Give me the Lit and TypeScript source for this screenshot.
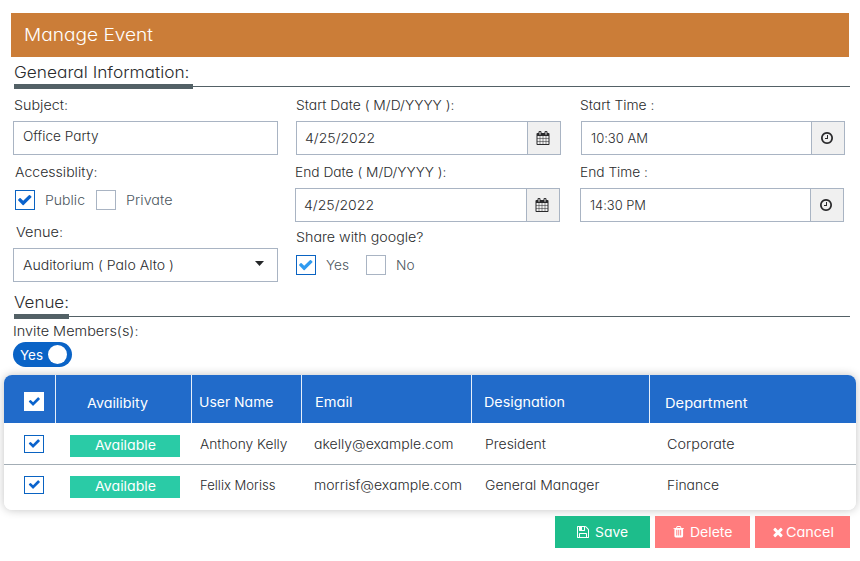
import { LitElement, html, css, svg, nothing } from "lit";
import { customElement, property } from "lit/decorators.js";

const icons: Record<string, string> = {
  check:
    "M1671 566q0 40-28 68l-724 724-136 136q-28 28-68 28t-68-28l-136-136-362-362q-28-28-28-68t28-68l136-136q28-28 68-28t68 28l294 295 656-657q28-28 68-28t68 28l136 136q28 28 28 68z",
  calendar:
    "M192 1664h288v-288h-288v288zm352 0h320v-288h-320v288zm-352-352h288v-320h-288v320zm352 0h320v-320h-320v320zm-352-384h288v-288h-288v288zm736 736h320v-288h-320v288zm-384-736h320v-288h-320v288zm768 736h288v-288h-288v288zm-384-352h320v-320h-320v320zm-352-864v-288q0-13-9.5-22.5t-22.5-9.5h-64q-13 0-22.5 9.5t-9.5 22.5v288q0 13 9.5 22.5t22.5 9.5h64q13 0 22.5-9.5t9.5-22.5zm736 864h288v-320h-288v320zm-384-384h320v-288h-320v288zm384 0h288v-288h-288v288zm32-480v-288q0-13-9.5-22.5t-22.5-9.5h-64q-13 0-22.5 9.5t-9.5 22.5v288q0 13 9.5 22.5t22.5 9.5h64q13 0 22.5-9.5t9.5-22.5zm384-64v1280q0 52-38 90t-90 38h-1408q-52 0-90-38t-38-90v-1280q0-52 38-90t90-38h128v-96q0-66 47-113t113-47h64q66 0 113 47t47 113v96h384v-96q0-66 47-113t113-47h64q66 0 113 47t47 113v96h128q52 0 90 38t38 90z",
  clock:
    "M1024 544v448q0 14-9 23t-23 9h-320q-14 0-23-9t-9-23v-64q0-14 9-23t23-9h224v-352q0-14 9-23t23-9h64q14 0 23 9t9 23zm416 352q0-148-73-273t-198-198-273-73-273 73-198 198-73 273 73 273 198 198 273 73 273-73 198-198 73-273zm224 0q0 209-103 385.5t-279.5 279.5-385.5 103-385.5-103-279.5-279.5-103-385.5 103-385.5 279.5-279.5 385.5-103 385.5 103 279.5 279.5 103 385.5z",
  save:
    "M512 1536h768v-384h-768v384zm896 0h128v-896q0-14-10-38.5t-20-34.5l-281-281q-10-10-34-20t-39-10v416q0 40-28 68t-68 28h-576q-40 0-68-28t-28-68v-416h-128v1280h128v-416q0-40 28-68t68-28h832q40 0 68 28t28 68v416zm-384-928v-320q0-13-9.5-22.5t-22.5-9.5h-192q-13 0-22.5 9.5t-9.5 22.5v320q0 13 9.5 22.5t22.5 9.5h192q13 0 22.5-9.5t9.5-22.5zm640 32v928q0 40-28 68t-68 28h-1344q-40 0-68-28t-28-68v-1344q0-40 28-68t68-28h928q40 0 88 20t76 48l280 280q28 28 48 76t20 88z",
  trash:
    "M704 1376v-704q0-14-9-23t-23-9h-64q-14 0-23 9t-9 23v704q0 14 9 23t23 9h64q14 0 23-9t9-23zm256 0v-704q0-14-9-23t-23-9h-64q-14 0-23 9t-9 23v704q0 14 9 23t23 9h64q14 0 23-9t9-23zm256 0v-704q0-14-9-23t-23-9h-64q-14 0-23 9t-9 23v704q0 14 9 23t23 9h64q14 0 23-9t9-23zm-544-992h448l-48-117q-7-9-17-11h-317q-10 2-17 11zm928 32v64q0 14-9 23t-23 9h-96v948q0 83-47 143.5t-113 60.5h-832q-66 0-113-58.5t-47-141.5v-952h-96q-14 0-23-9t-9-23v-64q0-14 9-23t23-9h309l70-167q15-37 54-63t79-26h320q40 0 79 26t54 63l70 167h309q14 0 23 9t9 23z",
  times:
    "M1490 1322q0 40-28 68l-136 136q-28 28-68 28t-68-28l-294-294-294 294q-28 28-68 28t-68-28l-136-136q-28-28-28-68t28-68l294-294-294-294q-28-28-28-68t28-68l136-136q28-28 68-28t68 28l294 294 294-294q28-28 68-28t68 28l136 136q28 28 28 68t-28 68l-294 294 294 294q28 28 28 68z",
};

const icon = (name: string, size = 14) => svg`
  <svg width=${size} height=${size} viewBox="0 0 1792 1792" overflow="visible" fill="currentColor">
    <path d=${icons[name]} />
  </svg>`;

/** One line of text, widened or narrowed so that it spans a set width. */
@customElement("fitted-text")
export class FittedText extends LitElement {
  @property({ type: Number }) span = 0;
  @property() text = "";

  static styles = css`
    :host {
      display: inline-block;
      white-space: pre;
      line-height: 20px;
      flex: none;
    }
    span { display: inline-block; transform-origin: 0 50%; }
  `;

  firstUpdated() {
    const line = this.renderRoot.querySelector("span")!;
    const natural = line.getBoundingClientRect().width;
    line.style.transform = `scaleX(${this.span / natural})`;
    this.style.width = `${this.span}px`;
  }

  render() {
    return html`<span>${this.text}</span>`;
  }
}

const t = (text: string, span: number) =>
  html`<fitted-text .text=${text} .span=${span}></fitted-text>`;

interface Member {
  name: [string, number];
  email: [string, number];
  title: [string, number];
  dept: [string, number];
}

const members: Member[] = [
  {
    name: ["Anthony Kelly", 87.5],
    email: ["akelly@example.com", 139.5],
    title: ["President", 61],
    dept: ["Corporate", 67.5],
  },
  {
    name: ["Fellix Moriss", 75.5],
    email: ["morrisf@example.com", 148],
    title: ["General Manager", 114.5],
    dept: ["Finance", 52],
  },
];

@customElement("app-root")
export class AppRoot extends LitElement {
  static styles = css`
    :host {
      display: block;
      box-sizing: border-box;
      width: 860px;
      height: 561px;
      overflow: hidden;
      padding: 13px 10px 0 11px;
      background: #fff;
      color: #2a2b2d;
      font: 400 13px/20px Inter, "Open Sans", sans-serif;
      font-weight: 350;
      font-feature-settings: "cv11", "calt" 0;
    }
    * { box-sizing: border-box; }
    svg { display: block; flex: none; }
    .banner {
      width: 838px;
      height: 44px;
      padding: 12px 0 0 12.8px;
      background: #cb7d38;
      color: #fff;
      font-size: 17.5px;
    }
    .section { display: flex; align-items: flex-end; margin-left: 3px; }
    .section.first { height: 32px; }
    .section.second { height: 37px; }
    .section h2 {
      margin: 0;
      height: 26px;
      border-bottom: 5px solid #536166;
      font-size: 15.8px;
      font-weight: 350;
      line-height: 20px;
    }
    .section h2.general { width: 179px; }
    .section h2.venue { width: 55px; }
    .rule { flex: 1; height: 1px; margin-bottom: 2px; background: #536166; }
    .columns { display: flex; height: 193px; padding: 6px 0 0 2px; }
    .col { display: flex; flex-direction: column; width: 265px; }
    .col.dates { margin-left: 17px; width: 266px; }
    .col.times { margin-left: 19px; width: 265px; }
    .label { height: 26px; }
    .label.first { padding-left: 0.8px; }
    .label.gap { height: 33px; padding-top: 7px; }
    .label.access { padding-left: 0.8px; }
    .label.venue { height: 38px; padding: 12px 0 0 1.5px; }
    .label.share { height: 32px; padding-top: 5px; }
    .box {
      display: flex;
      width: 265px;
      height: 34px;
      border: 1px solid #a9b4c3;
      padding: 6px 0 0 9px;
    }
    .box.subject { padding-top: 4px; }
    .box.select { justify-content: space-between; padding-right: 13px; }
    .box .value { flex: 1; }
    .dates .box { padding-left: 7.6px; }
    .times .box { width: 264px; padding-left: 8.8px; }
    .addon {
      display: flex;
      align-items: center;
      justify-content: center;
      width: 33px;
      height: 32px;
      padding-right: 2px;
      margin-top: -6px;
      border-left: 1px solid #a9b4c3;
      background: #f0f0f0;
      color: #29292b;
    }
    .inset { margin-left: 1px; }
    .caret {
      margin-top: 6px;
      width: 9px;
      height: 5px;
      background: #252729;
      clip-path: polygon(0 0, 100% 0, 50% 100%);
    }
    .choices { display: flex; align-items: center; height: 20px; color: #4c565e; }
    .choices.access { margin: 2px 0 0 2px; }
    .choices.share { margin: 1px 0 0 1px; }
    .check {
      display: flex;
      align-items: center;
      justify-content: center;
      width: 20px;
      height: 20px;
      border: 1px solid #a9b4c3;
      flex: none;
      margin-right: 10px;
    }
    .check.on { border-color: #0a63c2; color: #0a63cd; padding-bottom: 1px; }
    .check.light { color: #2f9bf0; }
    .next { margin-left: 11px; }
    .share .next { margin-left: 17px; }
    .invite { padding: 2px 0 0 2px; height: 56px; }
    .toggle {
      display: flex;
      align-items: center;
      justify-content: space-between;
      width: 59px;
      height: 25px;
      margin-top: 1px;
      padding: 0 5px 0 7px;
      border-radius: 13px;
      background: #0a63c6;
      color: #fff;
      font-weight: 400;
    }
    .knob { width: 19px; height: 19px; border-radius: 50%; background: #fff; }
    .shadow {
      width: 852px;
      margin-left: -7px;
      border-radius: 8px;
      box-shadow: 0 0 10px rgba(0, 0, 0, 0.24);
    }
    .table {
      height: 135px;
      border-radius: 8px;
      overflow: hidden;
      background: #fff;
    }
    .row {
      display: grid;
      grid-template-columns: 52px 136px 110px 170px 178px 206px;
      height: 41px;
    }
    .row.head { height: 48px; background: #216bca; color: #fff; font-weight: 400; }
    .row.ruled { height: 42px; border-bottom: 1px solid #a3adb5; }
    .cell { padding-top: 10px; }
    .ruled .cell { padding-top: 11px; }
    .head .cell { padding-top: 17px; border-right: 1px solid #e6effa; }
    .head .cell:last-child { border-right: 0; }
    .head .cell.low { padding-top: 18px; }
    .cell .check { height: 18px; margin-left: 20px; margin-top: 1px; }
    .head .check.on { height: 19px; margin-top: 0; border: 0; background: #fff; }
    .c2 { padding-left: 8.4px; }
    .c3 { padding-left: 12.4px; }
    .c4 { padding-left: 13px; }
    .c5 { padding-left: 17.3px; }
    .head .c1 { padding-left: 31px; }
    .head .c2 { padding-left: 7.2px; }
    .head .c3 { padding-left: 13px; }
    .head .c4 { padding-left: 12.2px; }
    .head .c5 { padding-left: 15.3px; }
    .badge {
      display: flex;
      justify-content: center;
      width: 110px;
      height: 22px;
      margin: 1px 0 0 14px;
      background: #2acba6;
      color: #fff;
      font-weight: 400;
    }
    .actions { display: flex; justify-content: flex-end; gap: 5px; margin-top: 6px; width: 839px; }
    .btn {
      display: flex;
      align-items: center;
      width: 95px;
      height: 32px;
      background: #ff7c7d;
      color: #fff;
      font-weight: 400;
    }
    .btn.save { background: #1dbd8b; padding-left: 21px; gap: 5px; }
    .btn.delete { padding-left: 17px; gap: 4.5px; }
    .btn.cancel { padding-left: 16px; gap: 0.5px; }
  `;

  private check(on: boolean, size = 15.5, light = false) {
    return html`<span class="check ${on ? "on" : ""} ${light ? "light" : ""}"
      >${on ? icon("check", size) : nothing}</span
    >`;
  }

  private field(value: string, span: number, glyph: string, cls = "") {
    return html`<div class="box ${cls}">
      <div class="value">${t(value, span)}</div>
      <div class="addon">${icon(glyph, 14)}</div>
    </div>`;
  }

  private row(m: Member, ruled: boolean) {
    return html`<div class="row ${ruled ? "ruled" : ""}">
      <div class="cell">${this.check(true, 12.7)}</div>
      <div class="cell"><div class="badge">${t("Available", 61)}</div></div>
      <div class="cell c2">${t(...m.name)}</div>
      <div class="cell c3">${t(...m.email)}</div>
      <div class="cell c4">${t(...m.title)}</div>
      <div class="cell c5">${t(...m.dept)}</div>
    </div>`;
  }

  render() {
    return html`
      <div class="banner">${t("Manage Event", 129)}</div>
      <div class="section first">
        <h2 class="general">${t("Genearal Information:", 175.5)}</h2>
        <div class="rule"></div>
      </div>
      <div class="columns">
        <div class="col">
          <div class="label first">${t("Subject:", 54)}</div>
          <div class="box subject">${t("Office Party", 75.5)}</div>
          <div class="label gap access inset">${t("Accessiblity:", 82.5)}</div>
          <div class="choices access">
            ${this.check(true)}${t("Public", 40)}
            <span class="next"></span>${this.check(false)}${t("Private", 46.5)}
          </div>
          <div class="label venue inset">${t("Venue:", 47)}</div>
          <div class="box select">
            ${t("Auditorium ( Palo Alto )", 151)}
            <span class="caret"></span>
          </div>
        </div>
        <div class="col dates">
          <div class="label inset">${t("Start Date ( M/D/YYYY ):", 158.5)}</div>
          ${this.field("4/25/2022", 70, "calendar", "inset")}
          <div class="label gap">${t("End Date ( M/D/YYYY ):", 151.5)}</div>
          ${this.field("4/25/2022", 70, "calendar")}
          <div class="label share inset">${t("Share with google?", 127.5)}</div>
          <div class="choices share">
            ${this.check(true, 15.5, true)}${t("Yes", 23)}
            <span class="next"></span>${this.check(false)}${t("No", 18.5)}
          </div>
        </div>
        <div class="col times">
          <div class="label">${t("Start Time :", 74.5)}</div>
          ${this.field("10:30 AM", 57, "clock", "inset")}
          <div class="label gap">${t("End Time :", 68)}</div>
          ${this.field("14:30 PM", 56, "clock")}
        </div>
      </div>
      <div class="section second">
        <h2 class="venue">${t("Venue:", 55)}</h2>
        <div class="rule"></div>
      </div>
      <div class="invite">
        ${t("Invite Members(s):", 125.5)}
        <div class="toggle">${t("Yes", 23)}<span class="knob"></span></div>
      </div>
      <div class="shadow">
        <div class="table">
          <div class="row head">
            <div class="cell">${this.check(true, 12.7)}</div>
            <div class="cell c1 low">${t("Availibity", 61)}</div>
            <div class="cell c2">${t("User Name", 74.5)}</div>
            <div class="cell c3">${t("Email", 37.5)}</div>
            <div class="cell c4">${t("Designation", 81)}</div>
            <div class="cell c5 low">${t("Department", 82.5)}</div>
          </div>
          ${members.map((m, i) => this.row(m, i === 0))}
        </div>
      </div>
      <div class="actions">
        <div class="btn save">${icon("save", 14)}${t("Save", 33)}</div>
        <div class="btn delete">${icon("trash", 13.5)}${t("Delete", 42.5)}</div>
        <div class="btn cancel">${icon("times", 14)}${t("Cancel", 48)}</div>
      </div>
    `;
  }
}
